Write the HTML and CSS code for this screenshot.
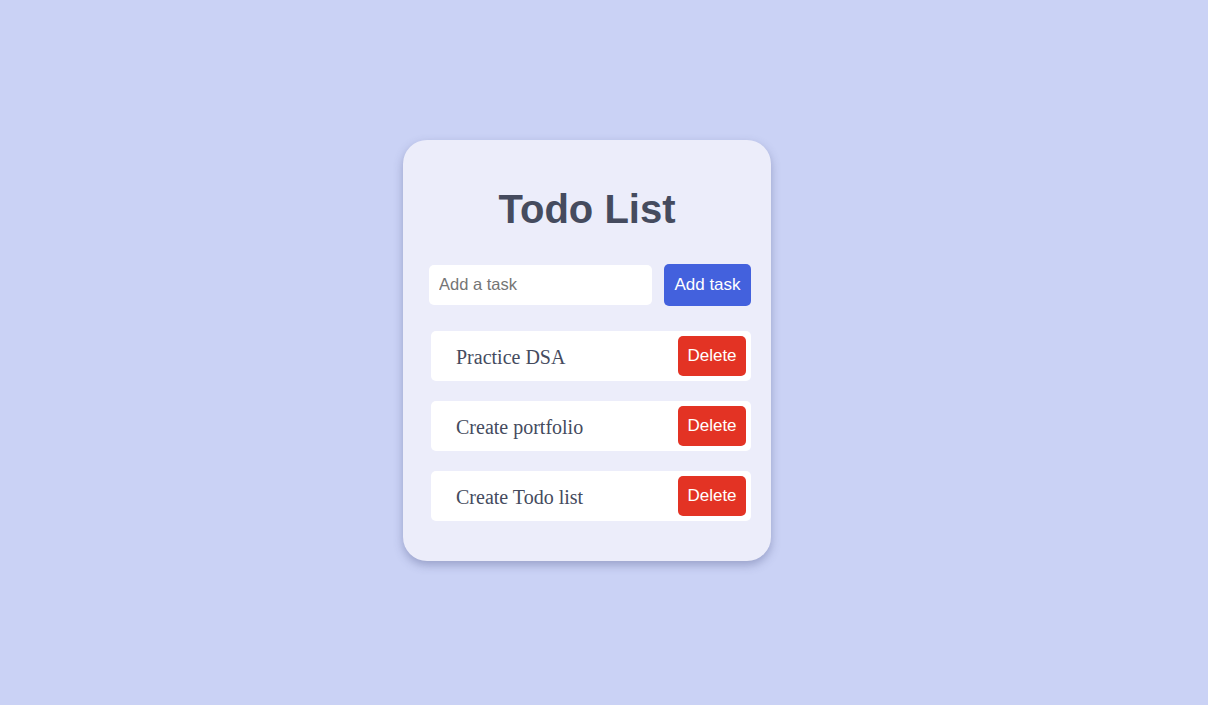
FILE: index.html
```html
<!DOCTYPE html>
<html>
<head>
<meta charset="utf-8">
<link rel="stylesheet" href="styles.css">
</head>
<body>
<div class="card">
  <h1 class="title">Todo List</h1>
  <div class="add-row">
    <input class="task-input" type="text" placeholder="Add a task">
    <button class="add-btn">Add task</button>
  </div>
  <ul class="list">
    <li class="item"><span class="item-text">Practice DSA</span><button class="del-btn">Delete</button></li>
    <li class="item"><span class="item-text">Create portfolio</span><button class="del-btn">Delete</button></li>
    <li class="item"><span class="item-text">Create Todo list</span><button class="del-btn">Delete</button></li>
  </ul>
</div>
</body>
</html>
```
FILE: styles.css
```css
html, body {
  margin: 0;
  padding: 0;
}
body {
  background: #cad2f5;
  min-height: 705px;
  display: flex;
  justify-content: center;
  align-items: center;
  padding-right: 34px;
  padding-bottom: 4px;
  box-sizing: border-box;
  font-family: "Liberation Sans", Arial, sans-serif;
}
.card {
  width: 368px;
  height: 421px;
  box-sizing: border-box;
  background: #ecedfa;
  border-radius: 24px;
  box-shadow: 0 4px 10px rgba(60, 70, 120, 0.35);
  padding: 47px 20px 0 26px;
}
.title {
  margin: 0 0 0 -6px;
  text-align: center;
  font-size: 40px;
  font-weight: bold;
  color: #454b5e;
  line-height: 44px;
}
.add-row {
  display: flex;
  align-items: center;
  gap: 12px;
  margin-top: 33px;
}
.task-input {
  width: 223px;
  height: 40px;
  box-sizing: border-box;
  border: none;
  border-radius: 5px;
  background: #fff;
  padding: 0 10px 2px;
  font-family: "Liberation Sans", Arial, sans-serif;
  font-size: 16.5px;
  color: #333;
  outline: none;
}
.task-input::placeholder {
  color: #757575;
}
.add-btn {
  width: 87px;
  height: 42px;
  border: none;
  border-radius: 5px;
  background: #4361dd;
  color: #fff;
  font-family: "Liberation Sans", Arial, sans-serif;
  font-size: 17px;
  padding: 0;
}
.list {
  list-style: none;
  margin: 25px 0 0 2px;
  padding: 0;
  display: flex;
  flex-direction: column;
  gap: 20px;
}
.item {
  display: flex;
  align-items: center;
  justify-content: space-between;
  height: 50px;
  box-sizing: border-box;
  background: #fff;
  border-radius: 5px;
  padding: 5px 5px 5px 25px;
}
.item-text {
  font-family: "Liberation Serif", "Times New Roman", serif;
  font-size: 20px;
  color: #454b5e;
  padding-top: 2px;
}
.del-btn {
  width: 68px;
  height: 40px;
  border: none;
  border-radius: 5px;
  background: #e33324;
  color: #fff;
  font-family: "Liberation Sans", Arial, sans-serif;
  font-size: 17px;
  padding: 0;
}
```
